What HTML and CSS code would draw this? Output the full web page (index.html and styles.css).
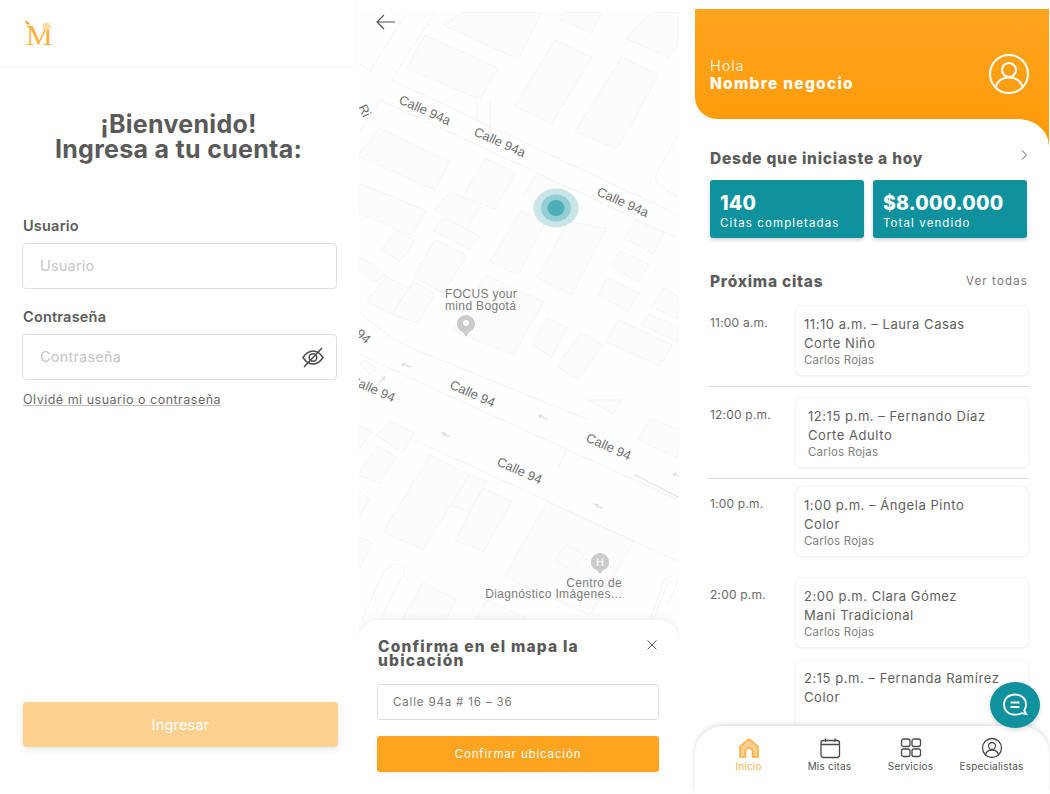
FILE: index.html
```html
<!DOCTYPE html>
<html lang="es">
<head>
    <meta charset="UTF-8">
    <meta name="viewport" content="width=device-width, initial-scale=1.0">
    <title>Pantallas app citas</title>
    <link rel="stylesheet" href="styles.css">
</head>
<body>
    <div class="screens">

        <!-- login -->
        <section class="login">
            <header class="login-top">
                <svg class="logo" width="32" height="38" viewBox="0 0 32 38">
                    <path class="logo-leaf" d="M0 4c2.500 0 4 1.200 4.800 4C2.300 8 .8 6.800 0 4z"/>
                    <text class="logo-m" x="1" y="28">M</text>
                    <circle class="logo-ball" cx="21.500" cy="9.500" r="3.800"/>
                </svg>
            </header>
            <div class="login-body">
                <h1>¡Bienvenido!<br>Ingresa a tu cuenta:</h1>
                <label class="field-label">Usuario</label>
                <div class="field">Usuario</div>
                <label class="field-label field-label--second">Contraseña</label>
                <div class="field">
                    Contraseña
                    <svg class="eye" width="24" height="24" viewBox="0 0 24 24">
                        <path d="M2 12.500c3-4.500 6.500-6.500 10-6.500s7 2 10 6.500c-3 4.500-6.500 6.500-10 6.500s-7-2-10-6.500z"/>
                        <circle cx="12" cy="12.500" r="3.800"/>
                        <path d="M3 22L21 3"/>
                    </svg>
                </div>
                <a class="forgot">Olvidé mi usuario o contraseña</a>
                <button class="login-btn">Ingresar</button>
            </div>
        </section>

        <!-- mapa -->
        <section class="map-screen">
            <svg class="map" width="320" height="782" viewBox="0 0 320 782">
                <g transform="translate(-4 -12) scale(.33333)">
                    <path class="road" d="M110 240L970 645M75 300L970 715M12 935C60 975 110 1020 160 1040L700 1260M12 1060L200 1150L970 1500M12 400L75 300M110 240L240 38M45 215L155 38M12 190L45 215"/>
                    <path class="road" d="M365 300L365 360L405 385L405 300M970 400L905 520C895 545 905 555 970 590"/>
                    <polygon class="bld" points="265,75 320,38 560,38 490,178"/>
                    <polygon class="bld" points="155,205 210,105 430,205 375,298"/>
                    <polygon class="bld" points="478,318 600,120 712,172 590,370"/>
                    <polygon class="bld" points="660,395 800,172 912,225 785,448"/>
                    <polygon class="bld" points="812,115 890,38 970,38 970,130 940,172"/>
                    <polygon class="bld" points="615,60 630,38 740,38 710,98"/>
                    <polygon class="bld" points="12,465 75,385 285,485 240,570 12,470"/>
                    <polygon class="bld" points="325,590 390,475 483,518 420,628"/>
                    <polygon class="bld" points="505,585 545,520 650,570 600,650"/>
                    <polygon class="bld" points="405,785 495,632 570,670 490,825"/>
                    <polygon class="bld" points="545,832 640,665 755,685 650,885"/>
                    <polygon class="bld" points="12,550 215,632 170,705 12,640"/>
                    <polygon class="bld" points="240,630 285,575 378,620 335,688"/>
                    <polygon class="bld" points="235,692 265,655 375,708 345,750"/>
                    <polygon class="bld" points="80,748 125,690 180,725 135,785"/>
                    <polygon class="bld" points="175,830 240,718 335,765 265,880"/>
                    <polygon class="bld" points="805,715 840,660 928,700 895,762"/>
                    <polygon class="bld" points="765,795 795,752 882,795 850,848"/>
                    <polygon class="bld" points="728,885 760,833 852,878 820,935"/>
                    <polygon class="bld" points="750,1025 790,960 952,1035 915,1098"/>
                    <polygon class="bld" points="605,1100 678,997 745,1035 670,1138"/>
                    <polygon class="bld" points="888,922 925,865 972,890 972,955"/>
                    <polygon class="bld" points="860,975 880,940 972,985 972,1028"/>
                    <polygon class="bld" points="530,1030 575,952 638,985 590,1072"/>
                    <polygon class="bld" points="112,945 175,845 240,880 190,970"/>
                    <polygon class="bld" points="35,905 95,830 160,865 110,945"/>
                    <polygon class="bld" points="290,990 390,825 565,905 475,1065"/>
                    <polygon class="bld" points="12,770 60,795 90,825 60,845 12,810"/>
                    <polygon class="bld" points="12,1090 30,1080 65,1105 45,1125"/>
                    <path class="arrow" d="M138 1092l14-6-2 6 18 8-2 4-18-8-2 5z"/>
                    <path class="arrow" d="M92 1128l-14 4 4 4-12 12 3 3 12-12 4 4z"/>
                </g>
                <g transform="translate(-4 388) scale(.33333)">
                    <polygon class="bld" points="85,395 225,165 340,225 205,450"/>
                    <polygon class="bld" points="300,420 385,265 470,305 385,455"/>
                    <polygon class="bld" points="290,318 345,222 395,245 340,335"/>
                    <polygon class="bld" points="448,530 575,305 838,425 705,645"/>
                    <polygon class="bld" points="600,478 635,432 688,465 650,510"/>
                    <polygon class="bld" points="65,105 105,62 180,100 140,160"/>
                    <polygon class="bld" points="12,215 70,135 125,172 75,250 12,225"/>
                    <polygon class="bld" points="850,120 885,55 972,90 972,175"/>
                    <polygon class="bld" points="700,0 800,0 775,42"/>
                    <polygon class="bld" points="12,75 50,95 12,150"/>
                    <polygon class="bld" points="12,275 45,295 12,350"/>
                    <polygon class="bld" points="12,410 55,430 12,505"/>
                    <path class="road" d="M20 660L85 520C105 480 160 485 145 525L75 660"/>
                    <polygon class="bld" points="140,660 205,548 305,598 270,660"/>
                    <polygon class="bld" points="360,660 395,600 515,655 510,660"/>
                    <path class="road" d="M885 660L930 535L942 540L895 660M940 610L972 535"/>
                    <path class="road" d="M635 145L610 205M175 118L972 485"/>
                    <path class="curb" d="M840 225L972 292"/>
                    <path class="arrow" d="M258 95l16 3-2 4 14 6-2 4-14-6-2 4z"/>
                    <path class="arrow" d="M548 46l14-4-1 6 18 8-2 4-18-8-2 5z"/>
                    <path class="arrow" d="M714 310l18 3-2 4 14 6-2 4-14-6-2 4z"/>
                    <path class="arrow" d="M952 220l12-3-1 5 8 4v4l-10-4-2 4z"/>
                </g>
                <g transform="translate(-359 -12)">
                    <text class="street" transform="translate(398 103) rotate(24)">Calle 94a</text>
                    <text class="street" transform="translate(473 135) rotate(24)">Calle 94a</text>
                    <text class="street" transform="translate(596 195) rotate(24)">Calle 94a</text>
                    <text class="street" transform="translate(449 388) rotate(24)">Calle 94</text>
                    <text class="street" transform="translate(585 441) rotate(24)">Calle 94</text>
                    <text class="street" transform="translate(496 465) rotate(24)">Calle 94</text>
                    <text class="street" transform="translate(349 383) rotate(24)">Calle 94</text>
                    <text class="street" transform="translate(355 335) rotate(40)">94</text>
                    <text class="street" transform="translate(358 107) rotate(65)">Ri</text>
                    <text class="poi" x="445" y="298">FOCUS your</text>
                    <text class="poi" x="445" y="310">mind Bogotá</text>
                    <path class="pin" d="M466 337l-3-5c-3-1-6-4-6-8a9 9 0 0 1 18 0c0 4-3 7-6 8z"/>
                    <circle class="pin-hole" cx="466" cy="323" r="3"/>
                    <path class="pin" d="M600 574l-3-4c-4-1-6-4-6-8a9 9 0 0 1 18 0c0 4-2 7-6 8z"/>
                    <text class="pin-h" x="600" y="566">H</text>
                    <text class="poi poi--end" x="622" y="587">Centro de</text>
                    <text class="poi poi--end" x="622" y="598">Diagnóstico Imágenes...</text>
                    <ellipse class="mark-a" cx="556" cy="208" rx="22.500" ry="19.500"/>
                    <ellipse class="mark-b" cx="556" cy="208" rx="15" ry="13.500"/>
                    <ellipse class="mark-c" cx="556" cy="208" rx="8.500" ry="8"/>
                </g>
            </svg>
            <svg class="back" width="22" height="16" viewBox="0 0 22 16">
                <path d="M20 8H2M9 1L2 8l7 7"/>
            </svg>
            <div class="sheet">
                <div class="sheet-head">
                    <h2>Confirma en el mapa la ubicación</h2>
                    <svg class="close" width="12" height="12" viewBox="0 0 12 12">
                        <path d="M1.500 1.500l9 9M10.500 1.500l-9 9"/>
                    </svg>
                </div>
                <div class="address">Calle 94a # 16 – 36</div>
                <button class="confirm-btn">Confirmar ubicación</button>
            </div>
        </section>

        <!-- inicio -->
        <section class="home">
            <div class="hero">
                <div class="hero-text">
                    <div class="hello">Hola</div>
                    <div class="business">Nombre negocio</div>
                </div>
                <svg class="hero-user" width="42" height="42" viewBox="0 0 42 42">
                    <circle cx="21" cy="21" r="19"/>
                    <circle cx="21" cy="17" r="7"/>
                    <path d="M7.500 34c2-6 6.500-9.500 13.500-9.500S32.500 28 34.500 34"/>
                </svg>
            </div>
            <div class="home-body">
                <div class="section-head">
                    <h3>Desde que iniciaste a hoy</h3>
                    <svg class="chevron" width="8" height="12" viewBox="0 0 8 12"><path d="M2 1.500L6.500 6 2 10.500"/></svg>
                </div>
                <div class="stats">
                    <div class="stat"><strong>140</strong><span>Citas completadas</span></div>
                    <div class="stat"><strong>$8.000.000</strong><span>Total vendido</span></div>
                </div>
                <div class="section-head section-head--next">
                    <h3>Próxima citas</h3>
                    <a class="see-all">Ver todas</a>
                </div>
                <div class="agenda">
                    <div class="row row--line">
                        <div class="time">11:00 a.m.</div>
                        <div class="appt">
                            <div class="appt-title">11:10 a.m. – Laura Casas</div>
                            <div class="appt-title">Corte Niño</div>
                            <div class="appt-who">Carlos Rojas</div>
                        </div>
                    </div>
                    <div class="row row--line row--tight">
                        <div class="time">12:00 p.m.</div>
                        <div class="appt appt--indent">
                            <div class="appt-title">12:15 p.m. – Fernando Díaz</div>
                            <div class="appt-title">Corte Adulto</div>
                            <div class="appt-who">Carlos Rojas</div>
                        </div>
                    </div>
                    <div class="row row--far">
                        <div class="time">1:00 p.m.</div>
                        <div class="appt">
                            <div class="appt-title">1:00 p.m. – Ángela Pinto</div>
                            <div class="appt-title">Color</div>
                            <div class="appt-who">Carlos Rojas</div>
                        </div>
                    </div>
                    <div class="row">
                        <div class="time">2:00 p.m.</div>
                        <div class="appt">
                            <div class="appt-title">2:00 p.m. Clara Gómez</div>
                            <div class="appt-title">Mani Tradicional</div>
                            <div class="appt-who">Carlos Rojas</div>
                        </div>
                    </div>
                    <div class="row">
                        <div class="time"></div>
                        <div class="appt">
                            <div class="appt-title">2:15 p.m. – Fernanda Ramírez</div>
                            <div class="appt-title">Color</div>
                        </div>
                    </div>
                </div>
            </div>
            <button class="chat">
                <svg width="26" height="26" viewBox="0 0 26 26">
                    <path d="M13 2.500c6.500 0 11 4 11 10 0 2.500-.8 4.500-1.800 6l2 3.500-4.500-.8c-2 1-4.200 1.500-6.700 1.500-6.500 0-11-4.200-11-10.200s4.500-10 11-10z"/>
                    <path d="M8.500 10.500h9M8.500 15h9"/>
                </svg>
            </button>
            <nav class="tabs">
                <a class="tab tab--on">
                    <svg width="22" height="22" viewBox="0 0 22 22">
                        <path class="home-fill" d="M11 2L2 9.500V20h5.500v-5.500a3.500 3.500 0 0 1 7 0V20H20V9.500z"/>
                    </svg>
                    Inicio
                </a>
                <a class="tab">
                    <svg width="22" height="22" viewBox="0 0 22 22">
                        <rect x="2" y="3.500" width="18.500" height="17" rx="2.500"/>
                        <path d="M2 7.500h18.500M6.500 1.500v3.500M16 1.500v3.500"/>
                    </svg>
                    Mis citas
                </a>
                <a class="tab">
                    <svg width="22" height="22" viewBox="0 0 22 22">
                        <rect x="1.500" y="2" width="8.500" height="7.500" rx="2"/>
                        <rect x="12" y="2" width="8.500" height="7.500" rx="2"/>
                        <rect x="1.500" y="12" width="8.500" height="7.500" rx="2"/>
                        <rect x="12" y="12" width="8.500" height="7.500" rx="2"/>
                    </svg>
                    Servicios
                </a>
                <a class="tab">
                    <svg width="22" height="22" viewBox="0 0 22 22">
                        <circle cx="11" cy="11" r="9.500"/>
                        <circle cx="11" cy="9" r="3.500"/>
                        <path d="M4.500 17.500c1-3 3.200-4.500 6.500-4.500s5.500 1.500 6.500 4.500"/>
                    </svg>
                    Especialistas
                </a>
            </nav>
        </section>
    </div>
</body>
</html>
```

FILE: styles.css
```css
* { box-sizing: border-box; }
html, body { margin: 0; height: 100%; background: #fff; overflow: hidden; }
body { font-family: Inter, "Open Sans", sans-serif; color: #5c5c5c; }
h1, h2, h3 { margin: 0; }
button { font-family: inherit; border: 0; padding: 0; display: block; }
svg { display: block; }

.screens { display: flex; height: 794px; }

/* login */
.login { width: 354px; flex: none; display: flex; flex-direction: column; }
.login-top { height: 66px; padding: 17px 0 0 25px; box-shadow: 0 1px 4px rgba(0, 0, 0, .04); }
.logo-m { font-family: "Liberation Serif", serif; font-size: 30px; fill: #ffb13d; }
.logo-leaf { fill: #ff9f15; }
.logo-ball { fill: #ffd9a0; }
.login-body { flex: 1; padding: 0 17px 0 23px; display: flex; flex-direction: column; }
.login-body h1 { font-size: 25px; line-height: 25px; font-weight: 700; text-align: center; color: #5a5a5a; margin: 46px 0 0; padding-right: 3px; letter-spacing: .3px; }
.field-label { font-size: 14.500px; line-height: 18px; font-weight: 600; margin-top: 55px; color: #5c5c5c; letter-spacing: .2px; }
.field-label--second { margin-top: 19px; }
.field { height: 46px; margin-top: 8px; margin-left: -1px; padding: 0 0 2px 17px; border: 1px solid #e0e0e0; border-radius: 4px; font-size: 14.500px; color: #c6c6c6; display: flex; align-items: center; justify-content: space-between; letter-spacing: .2px; }
.eye { margin: 2px 11px 0 0; fill: none; stroke: #4c4c4c; stroke-width: 1.500; }
.forgot { margin-top: 11px; font-size: 12.500px; line-height: 17px; color: #6a6a6a; text-decoration: underline; text-decoration-color: #bbb; letter-spacing: .5px; }
.login-btn { margin-top: auto; margin-bottom: 47px; height: 45px; width: 315px; background: #ffd190; color: #fff; border-radius: 4px; font-size: 14.500px; box-shadow: 0 2px 6px rgba(0, 0, 0, .1); letter-spacing: .2px; }

/* mapa */
.map-screen { position: relative; width: 320px; flex: none; margin: 12px 0 0 5px; background: #fefefe; overflow: hidden; }
.bld { fill: #fcfcfc; stroke: #f5f5f5; stroke-width: 3; }
.road { fill: none; stroke: #f4f4f4; stroke-width: 3; }
.curb { fill: none; stroke: #dcdcdc; stroke-width: 3; }
.arrow { fill: #e2e2e2; }
.street { font-family: "Liberation Sans", sans-serif; font-size: 13px; fill: #6f6f6f; }
.poi { font-family: "Liberation Sans", sans-serif; font-size: 12px; fill: #7c7c7c; letter-spacing: .35px; }
.poi--end { text-anchor: end; }
.pin { fill: #cbcbcb; }
.pin-hole { fill: #fff; }
.pin-h { font-family: "Liberation Sans", sans-serif; font-size: 11px; font-weight: 700; fill: #f2f2f2; text-anchor: middle; }
.mark-a { fill: #c9e5e8; }
.mark-b { fill: #94cdd2; }
.mark-c { fill: #4fafb9; }
.back { position: absolute; left: 16px; top: 2px; fill: none; stroke: #555; stroke-width: 1.200; }
.sheet { position: absolute; left: 0; right: 0; bottom: 0; height: 174px; padding: 20px 20px 0 18px; background: #fff; border-radius: 20px 20px 0 0; box-shadow: 0 -3px 8px rgba(0, 0, 0, .05); }
.sheet-head { display: flex; justify-content: space-between; align-items: flex-start; height: 44px; }
.sheet-head h2 { width: 240px; margin-left: 1px; font-size: 15.500px; line-height: 14px; font-weight: 800; color: #5a5a5a; letter-spacing: 1.200px; }
.close { margin: -1px 1px 0 0; fill: none; stroke: #555; stroke-width: 1; }
.address { height: 36px; padding-left: 15px; border: 1px solid #e0e0e0; border-radius: 3px; font-size: 11.500px; line-height: 34px; color: #777; letter-spacing: .85px; }
.confirm-btn { width: 282px; height: 36px; margin: 16px 0 0; background: #ffa41f; color: #fff; border-radius: 3px; font-size: 11.500px; letter-spacing: .85px; box-shadow: 0 2px 5px rgba(0, 0, 0, .08); }

/* inicio */
.home { position: relative; width: 354px; flex: none; margin-left: 16px; margin-top: 9px; height: 785px; display: flex; flex-direction: column; }
.hero { position: relative; height: 110px; flex: none; padding: 48px 20px 0 15px; display: flex; justify-content: space-between; background: linear-gradient(#ffa41f, #ff9c0c); border-radius: 0 0 0 22px; color: #fff; }
.hero::after { content: ""; position: absolute; top: 100%; right: 0; width: 30px; height: 27px; background: radial-gradient(ellipse 30px 27px at 0 100%, transparent 98%, #ff9c0c 100%); }
.hello { font-size: 14.500px; line-height: 18px; font-weight: 300; letter-spacing: .95px; }
.business { font-size: 15.500px; line-height: 18px; font-weight: 800; letter-spacing: 1.250px; }
.hero-user { margin: -4px -1px 0 0; fill: none; stroke: #fff; stroke-width: 2; }
.home-body { flex: 1; min-height: 0; overflow: hidden; padding: 0 21px 0 15px; }
.section-head { display: flex; justify-content: space-between; align-items: center; height: 20px; margin-top: 29px; }
.section-head h3 { font-size: 15.500px; font-weight: 800; color: #5c5c5c; letter-spacing: .75px; }
.section-head--next { margin-top: 33px; }
.chevron { margin: -6px 0 0 0; fill: none; stroke: #555; stroke-width: 1; }
.see-all { font-size: 11.500px; color: #777; letter-spacing: 1.150px; }
.stats { display: flex; gap: 9px; margin-top: 12px; }
.stat { width: 154px; height: 58px; padding: 11px 10px 0; background: #0f929e; border-radius: 3px; color: #fff; box-shadow: 0 2px 4px rgba(0, 0, 0, .18); }
.stat strong { display: block; font-size: 19.500px; line-height: 24px; font-weight: 800; letter-spacing: .2px; }
.stat span { display: block; font-size: 11.500px; line-height: 15px; margin-top: 1px; letter-spacing: 1.100px; }
.agenda { margin-top: 14px; margin-left: -2px; width: 321px; }
.row { display: flex; margin-bottom: 11px; padding-left: 2px; }
.row--line { padding-bottom: 10px; margin-bottom: 10px; border-bottom: 1px solid #d9d9d9; }
.row--tight { margin-bottom: 7px; }
.row--far { margin-bottom: 20px; }
.time { width: 85px; flex: none; padding-top: 10px; font-size: 12px; line-height: 15px; color: #6a6a6a; letter-spacing: .2px; }
.appt { flex: 1; height: 71px; padding: 9px 0 0 8px; border: 1px solid #f4f4f4; border-radius: 7px; box-shadow: 0 1px 3px rgba(0, 0, 0, .05); }
.appt--indent { padding-left: 12px; }
.appt-title { font-size: 13px; line-height: 18.500px; color: #5f5f5f; letter-spacing: .55px; }
.appt-who { font-size: 11.500px; line-height: 17px; color: #808080; letter-spacing: .2px; }
.chat { position: absolute; right: 9px; top: 673px; width: 50px; height: 46px; border-radius: 50%; background: #0f929e; display: flex; align-items: center; justify-content: center; z-index: 3; box-shadow: 0 2px 5px rgba(0, 0, 0, .15); }
.chat svg { fill: none; stroke: #fff; stroke-width: 1.800; }
.tabs { position: relative; z-index: 2; height: 68px; flex: none; padding: 11px 0 0 13px; display: flex; background: #fff; border-radius: 28px 28px 0 0; box-shadow: 0 -2px 5px rgba(0, 0, 0, .12); }
.tab { width: 81px; display: flex; flex-direction: column; align-items: center; font-size: 10px; line-height: 14px; color: #555; letter-spacing: .2px; white-space: nowrap; }
.tab svg { fill: none; stroke: #4a4a4a; stroke-width: 1.300; }
.tab--on { color: #ffb14a; }
.home-fill { fill: #ffcf8c; stroke: #ffac38; stroke-width: 1.500; }
```
